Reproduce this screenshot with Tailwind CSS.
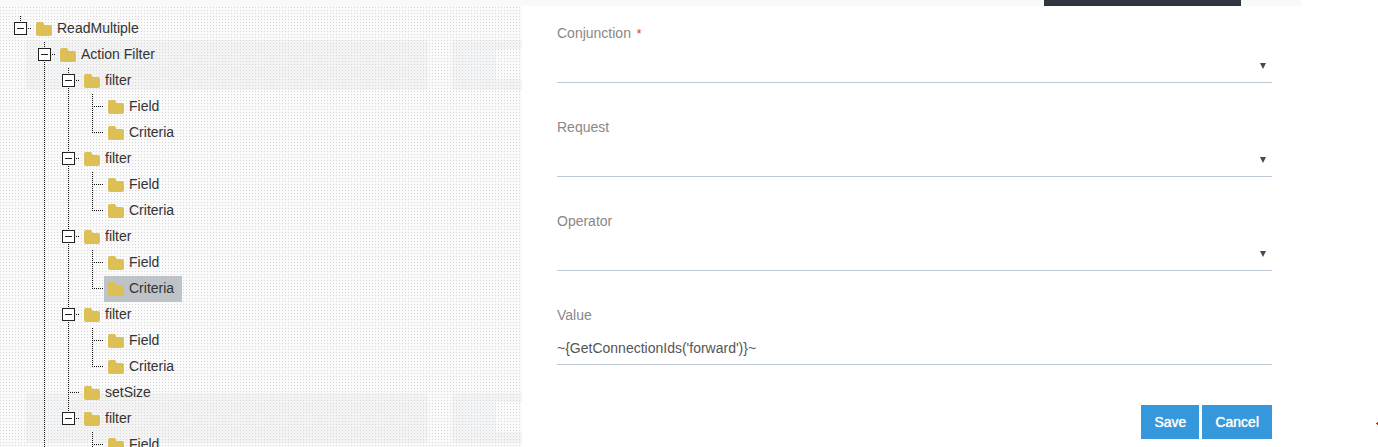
<!DOCTYPE html>
<html lang="en">
<head>
<meta charset="utf-8">
<title>Query builder</title>
<script src="https://cdn.jsdelivr.net/npm/@tailwindcss/browser@4"></script>
</head>
<body class="flex h-screen flex-col overflow-hidden bg-white font-['Liberation_Sans',Arial,sans-serif] text-sm">
<header class="mr-[76px] flex h-[6px] shrink-0 justify-end bg-[#f9f9f9] pr-[61px]">
  <div class="w-[197px] border-b border-[#332f38] bg-[#30353f]"></div>
</header>
<div class="flex min-h-0 flex-1">
  <aside class="grid w-[522px] shrink-0 overflow-hidden bg-[#fafafa]">
    <svg class="col-start-1 row-start-1 h-[480px] w-full" aria-hidden="true" shape-rendering="crispEdges">
      <defs>
        <pattern id="dots" width="3" height="3" patternUnits="userSpaceOnUse"><rect y="1" width="1" height="1" fill="#d8d8d8"/></pattern>
        <g id="band">
          <path d="M26 34h402v50H26zM452 34h70v50h-70z" fill="#f3f3f3"/>
          <path d="M40 43h32v30H40zM464 43h32v30h-32z" fill="#f2f4f7"/>
          <path d="M496 43h26v30h-26z" fill="#fafafa"/>
        </g>
      </defs>
      <use href="#band"/>
      <use href="#band" y="353"/>
      <rect width="100%" height="100%" fill="url(#dots)"/>
    </svg>
    <ul id="tree" role="tree" aria-label="Query" class="relative col-start-1 row-start-1 pt-[10px] pl-2 text-[#333333]"></ul>
  </aside>
  <main class="min-w-0 flex-1 pr-[106px] pl-[35px] pt-[18px]">
    <form class="flex flex-col">
      <div class="h-[94px]">
        <label for="conjunction" class="block h-[18px] leading-[18px] text-[#888888]">Conjunction <span class="ml-0.5 text-xs text-[#e8252b]">*</span></label>
        <div class="relative mt-[6px]">
          <select id="conjunction" required class="block h-[35px] w-full appearance-none border-b border-[#bfc8d6] bg-transparent outline-none"><option></option></select>
          <svg class="pointer-events-none absolute top-[15px] right-[6px] h-[6px] w-[6px]" viewBox="0 0 6 6"><path d="M0 0h6L3 6z" fill="#4a4a4a"/></svg>
        </div>
      </div>
      <div class="h-[94px]">
        <label for="request" class="block h-[18px] leading-[18px] text-[#888888]">Request</label>
        <div class="relative mt-[6px]">
          <select id="request" class="block h-[35px] w-full appearance-none border-b border-[#bfc8d6] bg-transparent outline-none"><option></option></select>
          <svg class="pointer-events-none absolute top-[15px] right-[6px] h-[6px] w-[6px]" viewBox="0 0 6 6"><path d="M0 0h6L3 6z" fill="#4a4a4a"/></svg>
        </div>
      </div>
      <div class="h-[94px]">
        <label for="operator" class="block h-[18px] leading-[18px] text-[#888888]">Operator</label>
        <div class="relative mt-[6px]">
          <select id="operator" class="block h-[35px] w-full appearance-none border-b border-[#bfc8d6] bg-transparent outline-none"><option></option></select>
          <svg class="pointer-events-none absolute top-[15px] right-[6px] h-[6px] w-[6px]" viewBox="0 0 6 6"><path d="M0 0h6L3 6z" fill="#4a4a4a"/></svg>
        </div>
      </div>
      <div>
        <label for="value" class="block h-[18px] leading-[18px] text-[#888888]">Value</label>
        <input id="value" type="text" value="~{GetConnectionIds('forward')}~" class="mt-[6px] block h-[35px] w-full border-b border-[#bfc8d6] bg-transparent pt-0.5 text-[#555555] outline-none">
      </div>
      <div class="mt-10 flex justify-end gap-[3px]">
        <button type="button" class="h-[34px] bg-[#3598dc] px-[13px] text-white text-shadow-[0_0_1px_#ffffff]">Save</button>
        <button type="button" class="h-[34px] bg-[#3598dc] px-[13px] text-white text-shadow-[0_0_1px_#ffffff]">Cancel</button>
      </div>
    </form>
  </main>
  <svg class="absolute right-0 bottom-[22px] h-[3px] w-[2px]" viewBox="0 0 2 3"><path d="M0 1h1v1H0zM1 0h1v3H1z" fill="#e02020"/></svg>
</div>
<script>
const lineAbove = 'w-px bg-[linear-gradient(#111111_50%,transparent_50%)] bg-[length:1px_2px]';
const lineBelow = 'w-px bg-[linear-gradient(transparent_50%,#111111_50%)] bg-[length:1px_2px]';
const folder = '<svg class="mt-0.5 h-[14px] w-[16px] shrink-0" viewBox="0 0 16 14"><path d="M2 0h4.500Q8 .2 8 2q.1 1 1 1h5q2 0 2 2v7q0 2-2 2H2q-2 0-2-2V2Q0 0 2 0z" fill="#dcbf55"/></svg>';
const leaves = [{ t: 'Field' }, { t: 'Criteria' }];
const data = [{ t: 'ReadMultiple', c: [
  { t: 'Action Filter', more: true, c: [
    { t: 'filter', c: leaves },
    { t: 'filter', c: leaves },
    { t: 'filter', c: [{ t: 'Field' }, { t: 'Criteria', sel: true }] },
    { t: 'filter', c: leaves },
    { t: 'setSize' },
    { t: 'filter', c: [{ t: 'Field', more: true }] }
  ] }
] }];
function node(n, last) {
  const cont = n.more || !last;
  const gutter = n.c
    ? `<div class="ml-[12px] h-[6px] shrink-0 ${lineAbove}"></div>
       <div class="ml-[6px] flex shrink-0 items-center">
         <button type="button" aria-label="Collapse ${n.t}" class="flex h-[13px] w-[13px] items-center justify-center border border-[#222222] bg-white"><span class="h-px w-[7px] bg-[#222222]"></span></button>
         <span class="h-px w-[4px] bg-[linear-gradient(90deg,transparent_50%,#111111_50%)] bg-[length:2px_1px]"></span>
       </div>`
    : `<div class="ml-[12px] h-[12px] shrink-0 ${lineAbove}"></div>
       <div class="ml-[12px] h-px w-[11px] shrink-0 bg-[linear-gradient(90deg,#111111_50%,transparent_50%)] bg-[length:2px_1px]"></div>`;
  return `<li role="treeitem" class="flex" ${n.c ? 'aria-expanded="true"' : ''} ${n.sel ? 'aria-selected="true"' : ''}>
    <div class="flex w-[24px] shrink-0 flex-col">${gutter}${cont ? `<div class="ml-[12px] flex-1 ${lineBelow}"></div>` : ''}</div>
    <div>
      <button type="button" class="flex h-[26px] items-center gap-[5px] pr-2 pb-0.5 pl-1 ${n.sel ? 'bg-[#bdc3c7]' : ''}">${folder}<span>${n.t}</span></button>
      ${n.c ? `<ul role="group">${n.c.map((k, i) => node(k, i === n.c.length - 1)).join('')}</ul>` : ''}
    </div>
  </li>`;
}
document.getElementById('tree').innerHTML = data.map(n => node(n, true)).join('');
</script>
</body>
</html>
